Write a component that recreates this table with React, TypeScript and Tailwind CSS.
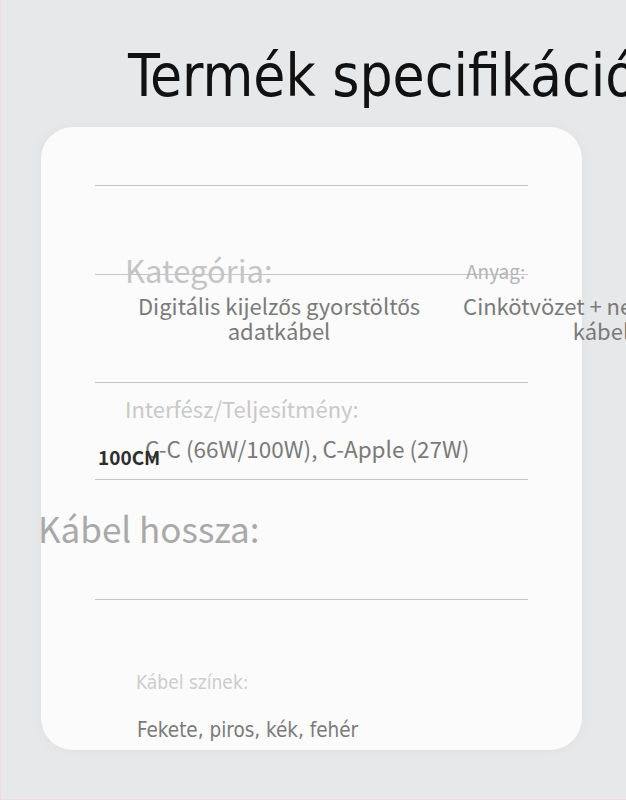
export default function App() {
  const cjk = "font-['Noto_Sans_CJK_SC',sans-serif]";
  const cond = "font-['DejaVu_Sans_Condensed',sans-serif]";

  return (
    <div className="w-[626px] h-[800px] overflow-hidden bg-[#e7e8ea] border-l border-b border-[#f0dadd]">
      {/* Cím */}
      <h1
        className={`${cond} pt-[47px] ml-[127px] whitespace-nowrap text-[58px] leading-[58px] font-normal text-[#111111]`}
      >
        Termék specifikáció
      </h1>

      {/* Kártya */}
      <div className="mt-[22px] ml-[40px] w-[541px] h-[623px] rounded-[32px] bg-[#fbfbfb] shadow-[0_0_14px_rgba(0,0,0,0.04)]">
        <div className="h-px" />
        <div className="mt-[57px] ml-[54px] w-[433px] h-px bg-[#c6c6c6]" />

        {/* Címkék sora */}
        <div className="mt-[68px] flex items-start">
          <div className={`${cjk} w-[425px] shrink-0 pl-[84px] text-[31px] leading-[31px] text-[#c4c4c4] whitespace-nowrap`}>
            Kategória:
          </div>
          <div className={`${cjk} mt-[7px] text-[19px] leading-[19px] text-[#b3b3b3] whitespace-nowrap`}>
            Anyag:
          </div>
        </div>
        <div className="-mt-[11px] ml-[54px] w-[433px] h-px bg-[#c6c6c6]" />

        {/* Értékek sora */}
        <div className={`${cjk} mt-[18px] flex text-[22px] leading-[25px] text-[#7a7a7a]`}>
          <div className="ml-[88px] w-[300px] shrink-0 text-center whitespace-nowrap">
            Digitális kijelzős gyorstöltős
            <br />
            adatkábel
          </div>
          <div className="ml-[22px] w-[300px] shrink-0 text-center whitespace-nowrap">
            Cinkötvözet + nejlon fonott
            <br />
            kábel
          </div>
        </div>

        <div className="mt-[39px] ml-[54px] w-[433px] h-px bg-[#c6c6c6]" />

        <div className={`${cjk} mt-[14px] ml-[84px] text-[22px] leading-[22px] text-[#c9c9c9] whitespace-nowrap`}>
          Interfész/Teljesítmény:
        </div>

        <div className="mt-[18px] grid">
          <div className={`${cjk} col-start-1 row-start-1 ml-[104px] text-[22.5px] leading-[22px] text-[#7a7a7a] whitespace-nowrap`}>
            C-C (66W/100W), C-Apple (27W)
          </div>
          <div className={`${cjk} col-start-1 row-start-1 mt-[10px] ml-[57px] text-[19px] leading-[19px] font-bold text-[#2e2e2e] whitespace-nowrap`}>
            100CM
          </div>
        </div>

        <div className="mt-[13px] ml-[54px] w-[433px] h-px bg-[#c6c6c6]" />

        <div className={`${cjk} mt-[30px] -ml-[3px] text-[35px] leading-[35px] text-[#a9a9a9] whitespace-nowrap`}>
          Kábel hossza:
        </div>

        <div className="mt-[54px] ml-[54px] w-[433px] h-px bg-[#c6c6c6]" />

        <div className={`${cond} mt-[73px] ml-[95px] text-[19px] leading-[19px] text-[#cdcdcd] whitespace-nowrap`}>
          Kábel színek:
        </div>
        <div className={`${cond} mt-[28px] ml-[96px] text-[20.5px] leading-[21px] text-[#7a7a7a] whitespace-nowrap`}>
          Fekete, piros, kék, fehér
        </div>
      </div>
    </div>
  );
}
